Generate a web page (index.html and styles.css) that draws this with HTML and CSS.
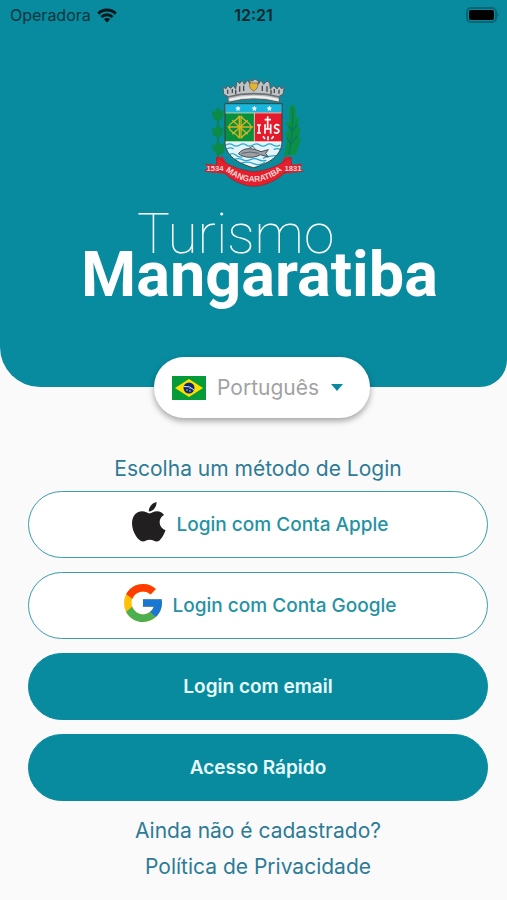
FILE: index.html
```html
<!DOCTYPE html>
<html lang="pt-BR">
<head>
    <meta charset="utf-8">
    <meta name="viewport" content="width=device-width, initial-scale=1.0">
    <title>Turismo Mangaratiba</title>
    <link rel="stylesheet" href="styles.css">
</head>
<body>
    <header class="header">
        <div class="status">
            <div class="carrier">
                <span>Operadora</span>
                <svg width="20" height="15" viewBox="0 0 20 15">
                    <g fill="none" stroke="#06181c" stroke-width="3">
                        <path d="M1.2 5.6 C6 .8 14 .8 18.8 5.6"/>
                        <path d="M4.4 9 C7.5 6 12.5 6 15.6 9"/>
                    </g>
                    <path d="M10 14.5 L6.8 11.3 C8.6 9.7 11.4 9.7 13.2 11.3 Z" fill="#06181c"/>
                </svg>
            </div>
            <span class="clock">12:21</span>
            <svg class="battery" width="34" height="16" viewBox="0 0 34 16">
                <rect x="1" y="1" width="29" height="14" rx="4" fill="none" stroke="#056575" stroke-width="2"/>
                <rect x="3" y="3" width="25" height="10" rx="2" fill="#000"/>
                <path d="M31.500 6 Q34 8 31.500 10 Z" fill="#056575"/>
            </svg>
        </div>

        <svg class="crest" width="102" height="108" viewBox="24 30 306 324" role="img" aria-label="Brasão de Mangaratiba">
            <!-- side plants -->
            <path d="M68 124 L68 268" stroke="#167a43" stroke-width="4"/>
            <g fill="#0c8a48">
                <path d="M68 112 L78 128 L86 122 L84 146 L70 158 L54 148 L50 124 L60 130 Z"/>
                <path d="M68 162 L78 178 L86 174 L84 196 L70 208 L54 198 L50 176 L60 180 Z"/>
                <path d="M68 212 L78 228 L88 222 L88 248 L72 260 L56 246 L50 224 L60 230 Z"/>
            </g>
            <path d="M292 106 L302 116 L304 150 L312 144 L310 178 L316 176 L312 206 L318 208 L304 256 L268 262 L276 214 L270 188 L280 190 L274 160 L284 158 L282 118 Z" fill="#0c9048"/>
            <path d="M292 116 C296 160 290 210 282 256 M282 170 L292 188 L306 166 M276 206 L288 226 L308 200" fill="none" stroke="#087a5c" stroke-width="4"/>
            <!-- shield -->
            <path d="M90 104 H261 V218 C261 258 222 284 176 296 C128 284 90 258 90 218 Z" fill="#fff"/>
            <path d="M91 105 H260 V131 H91 Z" fill="#18b5dc"/>
            <path d="M90 131 H178 V218 H90 Z" fill="#07913f"/>
            <path d="M178 131 H261 V218 H178 Z" fill="#e51b2b"/>
            <path d="M90 132 H261 M178 132 V218 M90 218 H261" stroke="#f4e9d0" stroke-width="2"/>
            <g fill="#fff">
                <path d="M129 110 L131 115 L137 116 L133 120 L134 126 L129 123 L124 126 L125 120 L121 116 L127 115 Z"/>
                <path d="M178 110 L180 115 L186 116 L182 120 L183 126 L178 123 L173 126 L174 120 L170 116 L176 115 Z"/>
                <path d="M223 110 L225 115 L231 116 L227 120 L228 126 L223 123 L218 126 L219 120 L215 116 L221 115 Z"/>
            </g>
            <!-- bows and arrows -->
            <g fill="none" stroke="#d7b320" stroke-width="4">
                <path d="M133 140 C126 158 102 160 102 174 C102 190 126 192 133 208 Z"/>
                <path d="M138 140 C146 158 168 160 168 174 C168 190 146 192 138 208 Z"/>
                <path d="M98 174 H174 M112 154 L158 196 M112 196 L158 154"/>
            </g>
            <!-- IHS monogram -->
            <g fill="none" stroke="#fff" stroke-width="5">
                <path d="M192 168 V192 M186 168 H198 M186 192 H198"/>
                <path d="M210 166 V194 M227 166 V194 M210 180 H227 M218 142 V180 M209 152 H228"/>
                <path d="M253 170 C241 162 233 176 244 179 C258 182 251 197 237 190"/>
                <path d="M204 202 L210 210 M219 202 V214 M236 202 L229 210"/>
            </g>
            <!-- sea and fish -->
            <path d="M91 220 H260 C260 257 222 281 176 292 C130 281 91 257 91 220 Z" fill="#e4f5fa"/>
            <g fill="none" stroke="#28a9d1" stroke-width="4">
                <path d="M94 228 Q104 221 114 228 T134 228 T154 228 T174 228 T194 228 T214 228 T234 228 T256 228"/>
                <path d="M96 240 Q106 233 116 240 M236 242 Q246 236 256 242"/>
                <path d="M102 258 Q112 250 122 258 T142 264 M204 268 Q218 260 246 260"/>
                <path d="M118 272 Q130 266 142 272 T166 272 T190 272 T214 274"/>
                <path d="M140 282 Q158 276 176 284 T210 280"/>
            </g>
            <path d="M130 254 C148 232 174 238 198 248 L220 242 L212 253 L220 264 L196 257 C176 269 148 267 130 254 Z" fill="#9aa2a7" stroke="#454d53" stroke-width="3"/>
            <path d="M140 253 Q165 245 192 253 M160 239 L174 232 L182 242" fill="none" stroke="#5c6468" stroke-width="3"/>
            <path d="M90 104 H261 V218 C261 258 222 284 176 296 C128 284 90 258 90 218 Z" fill="none" stroke="#3a3d35" stroke-width="3"/>
            <!-- mural crown -->
            <path d="M84 52 L92 60 L98 50 L106 58 L116 50 L122 60 L126 36 L134 44 L142 34 L148 46 L158 34 L166 46 L164 32 L172 36 L180 30 L190 36 L190 46 L198 34 L206 46 L216 36 L224 42 L226 60 L236 50 L246 60 L252 50 L260 60 L268 52 L264 76 L252 82 L254 100 Q176 80 100 100 L98 82 L86 76 Z" fill="#bfc3c5" stroke="#565d61" stroke-width="3"/>
            <path d="M98 84 Q176 64 254 84" fill="none" stroke="#6b7073" stroke-width="5"/>
            <path d="M103 93 Q176 74 250 93" fill="none" stroke="#f0f1f1" stroke-width="6"/>
            <path d="M98 62 V74 M112 60 V72 M134 52 V68 M146 50 V66 M202 50 V66 M216 52 V68 M238 60 V72 M252 62 V74 M122 62 V76 M228 62 V76" stroke="#454b50" stroke-width="4"/>
            <path d="M164 42 H188 V52 Q186 62 176 66 Q166 62 164 52 Z" fill="#e7b431" stroke="#665e3e" stroke-width="2"/>
            <!-- ribbon -->
            <path d="M62 264 L84 264 L96 288 L88 314 L28 308 L38 297 L30 284 L66 288 Z" fill="#d91e2c"/>
            <path d="M290 264 L268 264 L258 288 L264 314 L326 308 L314 297 L322 284 L286 288 Z" fill="#d91e2c"/>
            <path d="M66 264 C98 288 132 304 176 308 C222 304 254 288 288 264 L290 290 C262 322 226 350 176 352 C128 350 94 322 64 288 Z" fill="#e4202d" stroke="#99212c" stroke-width="2"/>
            <path id="ribbon" d="M82 298 Q176 380 272 296" fill="none"/>
            <text class="crest-name"><textPath href="#ribbon" startOffset="50%" text-anchor="middle">MANGARATIBA</textPath></text>
            <text class="crest-year" x="60" y="306" text-anchor="middle">1534</text>
            <text class="crest-year" x="294" y="306" text-anchor="middle">1831</text>
        </svg>

        <h1 class="brand">
            <span class="brand-top">Turismo</span>
            <span class="brand-name">Mangaratiba</span>
        </h1>
    </header>

    <label class="language">
        <svg width="34" height="24" viewBox="0 0 34 24" aria-hidden="true">
            <path d="M0 0 H34 V24 H0 Z" fill="#069b39"/>
            <path d="M17 3 L31 12 L17 21 L3 12 Z" fill="#fedf00"/>
            <circle cx="17" cy="12" r="5.500" fill="#10286f"/>
            <path d="M12 10.500 Q18 9.500 22 14" fill="none" stroke="#dce6f0" stroke-width="1"/>
            <path d="M14 14 H16 M17 15 H19 M18 12 V13" stroke="#9bb2d5" stroke-width="1"/>
        </svg>
        <select class="language-select" aria-label="Idioma">
            <option>Português</option>
            <option>English</option>
            <option>Español</option>
        </select>
        <svg width="12" height="7" viewBox="0 0 12 7" aria-hidden="true">
            <path d="M0 0 H12 L6 7 Z" fill="#088b9f"/>
        </svg>
    </label>

    <main class="login">
        <h2 class="login-title">Escolha um método de Login</h2>
        <button class="btn btn-social" type="button">
            <svg width="34" height="40" viewBox="0 0 34 40" aria-hidden="true">
                <path d="M24.500 0 C25 5 21 9.500 16.800 9.500 C16.500 5 20.500 .8 24.500 0 Z" fill="#211f20"/>
                <path d="M17.500 11.500 C19.500 11.500 21.500 9.300 25 9.300 C28 9.300 30.500 10.800 32 13 C25.500 16.500 26.500 25.500 33.500 28.200 C32 32.500 28.500 39.500 24.800 39.500 C22 39.500 21 37.800 17.800 37.800 C14.500 37.800 13.400 39.500 10.900 39.500 C6.200 39.500 0 29.500 0 21.500 C0 13.500 5 9.300 10 9.300 C13.300 9.300 15.700 11.500 17.500 11.500 Z" fill="#211f20"/>
            </svg>
            <span>Login com Conta Apple</span>
        </button>
        <button class="btn btn-social" type="button">
            <svg width="38" height="38" viewBox="4 4 40 40" aria-hidden="true">
                <path fill="#ffc107" d="M43.611 20.083H42V20H24v8h11.303c-1.649 4.657-6.080 8-11.303 8-6.627 0-12-5.373-12-12s5.373-12 12-12c3.059 0 5.842 1.154 7.961 3.039l5.657-5.657C34.046 6.053 29.268 4 24 4 12.955 4 4 12.955 4 24s8.955 20 20 20 20-8.955 20-20c0-1.341-.138-2.650-.389-3.917z"/>
                <path fill="#ff3d00" d="M6.306 14.691l6.571 4.819C14.655 15.108 18.961 12 24 12c3.059 0 5.842 1.154 7.961 3.039l5.657-5.657C34.046 6.053 29.268 4 24 4 16.318 4 9.656 8.337 6.306 14.691z"/>
                <path fill="#4caf50" d="M24 44c5.166 0 9.860-1.977 13.409-5.192l-6.190-5.238C29.211 35.091 26.715 36 24 36c-5.202 0-9.619-3.317-11.283-7.946l-6.522 5.025C9.505 39.556 16.227 44 24 44z"/>
                <path fill="#1976d2" d="M43.611 20.083H42V20H24v8h11.303c-.792 2.237-2.231 4.166-4.087 5.571l6.193 5.238C36.971 39.205 44 34 44 24c0-1.341-.138-2.650-.389-3.917z"/>
            </svg>
            <span>Login com Conta Google</span>
        </button>
        <button class="btn btn-filled" type="button">Login com email</button>
        <button class="btn btn-filled" type="button">Acesso Rápido</button>
        <nav class="links">
            <a href="#">Ainda não é cadastrado?</a>
            <a href="#">Política de Privacidade</a>
        </nav>
    </main>
</body>
</html>
```
FILE: styles.css
```css
* {
    box-sizing: border-box;
}
body {
    margin: 0;
    background: #fafafa;
    font-family: Inter, "Liberation Sans", sans-serif;
    color: #2d7b96;
}
.header {
    display: flex;
    flex-direction: column;
    align-items: center;
    padding-bottom: 93px;
    background: #088b9f;
    border-radius: 0 0 27px 40px;
}
.status {
    display: grid;
    grid-template-columns: 1fr auto 1fr;
    align-items: center;
    width: 100%;
    height: 30px;
    padding: 0 7px;
    font-size: 16px;
    color: #06353d;
}
.carrier {
    display: flex;
    align-items: center;
    gap: 6px;
    padding-left: 3px;
}
.clock {
    font-weight: 600;
    color: #06272d;
}
.battery {
    justify-self: end;
}
.crest {
    margin-top: 49px;
}
.crest-name {
    font-family: "Liberation Sans", sans-serif;
    font-size: 25px;
    font-weight: bold;
    fill: #fbd5d5;
}
.crest-year {
    font-family: "Liberation Sans", sans-serif;
    font-size: 23px;
    font-weight: bold;
    fill: #fbd5d5;
}
.brand {
    display: flex;
    flex-direction: column;
    margin: 25px 0 0 12px;
    font-family: Roboto, sans-serif;
    color: #fff;
}
.brand-top {
    padding-left: 56px;
    font-size: 55px;
    line-height: 44px;
    font-weight: 100;
}
.brand-name {
    font-size: 63px;
    line-height: 38px;
    font-weight: 700;
}
.language {
    position: relative;
    display: flex;
    align-items: center;
    justify-content: center;
    gap: 11px;
    width: 216px;
    height: 61px;
    margin: -30px auto 0;
    left: 8px;
    padding-right: 8px;
    border-radius: 30px;
    background: #fff;
    box-shadow: 0 3px 6px rgba(0, 0, 0, 0.35);
}
.language-select {
    appearance: none;
    padding: 0;
    border: none;
    background: none;
    font-family: inherit;
    font-size: 21px;
    color: #a2a2a2;
}
.login {
    display: flex;
    flex-direction: column;
    gap: 14px;
    padding: 37px 19px 16px 28px;
}
.login-title {
    margin: 0 0 -6px;
    font-size: 21px;
    line-height: 28px;
    font-weight: 400;
    text-align: center;
}
.btn {
    display: flex;
    align-items: center;
    justify-content: center;
    gap: 11px;
    width: 100%;
    height: 67px;
    border: 1px solid #399dac;
    border-radius: 34px;
    background: #fff;
    font-family: inherit;
    font-size: 19px;
    font-weight: 500;
    color: #2492a3;
    cursor: pointer;
}
.btn-social {
    padding-left: 10px;
}
.btn-social svg {
    margin-bottom: 6px;
}
.btn-filled {
    background: #088b9f;
    border-color: #088b9f;
    font-weight: 600;
    color: #e9fbfd;
}
.links {
    display: flex;
    flex-direction: column;
    align-items: center;
    gap: 8px;
    margin-top: 2px;
}
.links a {
    font-size: 21px;
    line-height: 28px;
    color: #2d7b96;
    text-decoration: none;
}
```
